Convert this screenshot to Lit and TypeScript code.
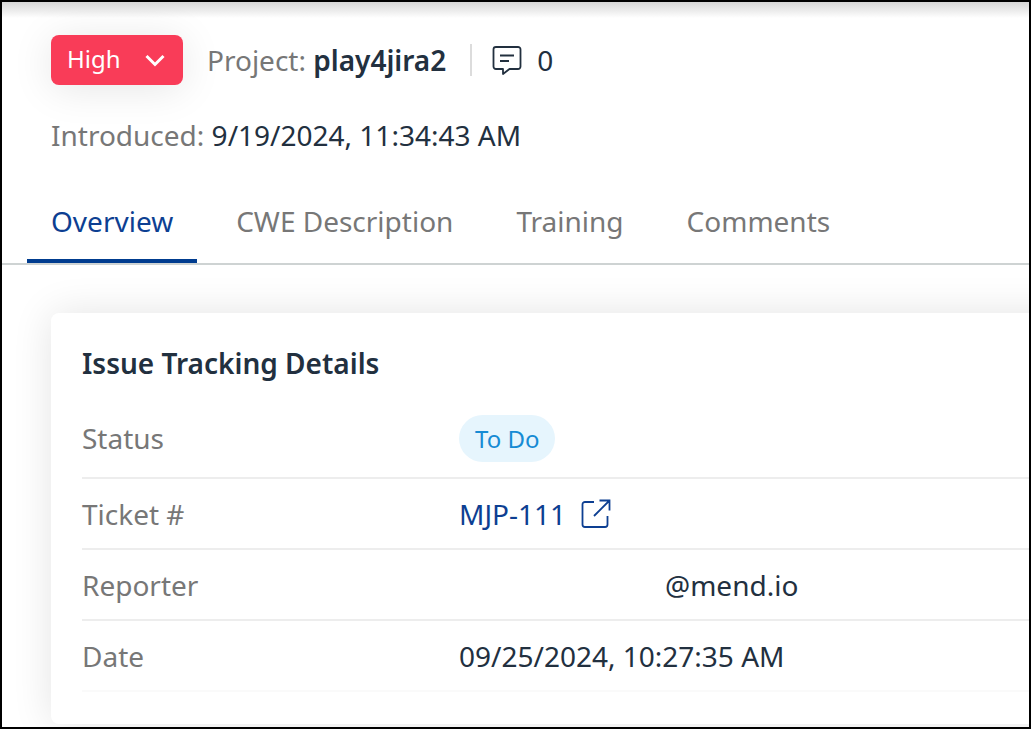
import { LitElement, html, css, nothing } from "lit";
import { customElement, state } from "lit/decorators.js";
import { classMap } from "lit/directives/class-map.js";

const TABS = ["Overview", "CWE Description", "Training", "Comments"];

@customElement("app-root")
export class AppRoot extends LitElement {
  @state() private active = "Overview";

  static styles = css`
    :host {
      display: block;
      box-sizing: border-box;
      height: 100vh;
      overflow: hidden;
      border: 2px solid #000;
      background: #fff linear-gradient(#d6d6d6, #fff) no-repeat 0 0 / 100% 16px;
      color: #22303f;
      font: 28px/38px "Noto Sans", sans-serif;
    }
    button,
    select {
      font: inherit;
      color: inherit;
      border: 0;
      background: none;
      padding: 0;
      margin: 0;
      cursor: pointer;
    }
    svg {
      display: block;
      fill: none;
      stroke: currentColor;
    }
    .muted {
      color: #777;
    }
    .head {
      padding: 33px 49px 0;
    }
    .summary {
      display: flex;
      align-items: center;
      gap: 24px;
    }
    .project {
      font-weight: 600;
    }
    .project .muted {
      font-weight: 400;
    }
    .severity {
      display: grid;
      align-items: center;
      border-radius: 8px;
      background: #f93c58;
      color: #fff;
      box-shadow: 0 4px 40px rgba(0, 0, 0, 0.1);
    }
    .severity select {
      grid-area: 1 / 1;
      appearance: none;
      width: 132px;
      height: 50px;
      padding: 0 48px 2px 16px;
      font-size: 24px;
      line-height: 32px;
    }
    .severity option {
      color: #22303f;
    }
    .severity svg {
      grid-area: 1 / 1;
      justify-self: end;
      margin-right: 16px;
      pointer-events: none;
      stroke-width: 3;
    }
    .divider {
      width: 2px;
      height: 32px;
      background: #dcdcdc;
    }
    .comments {
      display: flex;
      align-items: center;
      gap: 15px;
      margin-left: -4px;
    }
    .introduced {
      margin: 31px 0 0;
    }
    .tabs {
      display: flex;
      gap: 15px;
      margin-top: 40px;
      padding: 0 25px;
      border-bottom: 2px solid #ced3d3;
    }
    .tab {
      padding: 8px 24px 19px;
      border-bottom: 4px solid transparent;
      color: #777;
      white-space: nowrap;
    }
    .tab.on {
      color: #0d3f92;
      border-bottom-color: #003c8f;
    }
    .body {
      padding: 48px 0 48px 49px;
      overflow: hidden;
    }
    .card {
      margin-right: -48px;
      padding: 31px 48px 32px 31px;
      border-radius: 8px;
      background: #fff;
      box-shadow: 0 0 40px rgba(0, 0, 0, 0.11);
    }
    h2 {
      margin: 0;
      font-size: 28px;
      font-weight: 600;
      line-height: 38px;
    }
    dl {
      margin: 17px 0 0;
    }
    .row {
      display: grid;
      grid-template-columns: 377px 1fr;
      align-items: center;
      box-sizing: border-box;
      min-height: 71px;
      border-bottom: 2px solid #ededed;
    }
    .row.first {
      min-height: 80px;
    }
    .row:last-child {
      border-bottom-color: #fafafa;
    }
    dd {
      display: flex;
      align-items: center;
      margin: 0;
    }
    .pill {
      padding: 8px 16px;
      border-radius: 24px;
      background: #e6f5fd;
      color: #168bd4;
      font-size: 24px;
      line-height: 31px;
    }
    .ticket {
      display: flex;
      align-items: center;
      gap: 15px;
      color: #0d3f92;
      text-decoration: none;
    }
    .hidden-name {
      width: 206px;
    }
  `;

  render() {
    return html`
      <header class="head">
        <div class="summary">
          <div class="severity">
            <select aria-label="Severity">
              <option selected>High</option>
              <option>Medium</option>
              <option>Low</option>
            </select>
            <svg width="24" height="24" viewBox="0 0 24 24" aria-hidden="true">
              <path d="M3.5 8 12 16.500 20.500 8" />
            </svg>
          </div>
          <div class="project"><span class="muted">Project:</span> play4jira2</div>
          <span class="divider"></span>
          <button class="comments" aria-label="0 comments">
            <svg width="30" height="30" viewBox="0 0 30 30" stroke-width="1.8" stroke-linejoin="round" aria-hidden="true">
              <path d="M4 2h22a2.500 2.500 0 0 1 2.500 2.500v17A2.500 2.500 0 0 1 26 24H17.500l-6.500 5V24H4a2.500 2.500 0 0 1-2.500-2.500v-17A2.500 2.500 0 0 1 4 2Z" />
              <path d="M8 10.500h14M8 16h9" />
            </svg>
            <span>0</span>
          </button>
        </div>
        <p class="introduced"><span class="muted">Introduced:</span> 9/19/2024, 11:34:43 AM</p>
      </header>

      <div class="tabs" role="tablist">
        ${TABS.map(
          (t) => html`<button
            role="tab"
            aria-selected=${t === this.active}
            class=${classMap({ tab: true, on: t === this.active })}
            @click=${() => (this.active = t)}
          >${t}</button>`,
        )}
      </div>

      <main class="body">
        ${this.active === "Overview" ? this.details() : nothing}
      </main>
    `;
  }

  private details() {
    return html`
      <section class="card">
        <h2>Issue Tracking Details</h2>
        <dl>
          <div class="row first">
            <dt class="muted">Status</dt>
            <dd><span class="pill">To Do</span></dd>
          </div>
          <div class="row">
            <dt class="muted">Ticket #</dt>
            <dd>
              <a class="ticket" href="#MJP-111">
                <span>MJP-111</span>
                <svg width="30" height="30" viewBox="0 0 30 30" stroke-width="1.8" aria-hidden="true">
                  <path d="M13 3H4a2.500 2.500 0 0 0-2.500 2.500v20A2.500 2.500 0 0 0 4 28h20a2.500 2.500 0 0 0 2.500-2.500V17" />
                  <path d="M18.500 1.500H28.500V11.500M28.500 1.500 13 17" />
                </svg>
              </a>
            </dd>
          </div>
          <div class="row">
            <dt class="muted">Reporter</dt>
            <dd><span class="hidden-name"></span>@mend.io</dd>
          </div>
          <div class="row">
            <dt class="muted">Date</dt>
            <dd>09/25/2024, 10:27:35 AM</dd>
          </div>
        </dl>
      </section>
    `;
  }
}
